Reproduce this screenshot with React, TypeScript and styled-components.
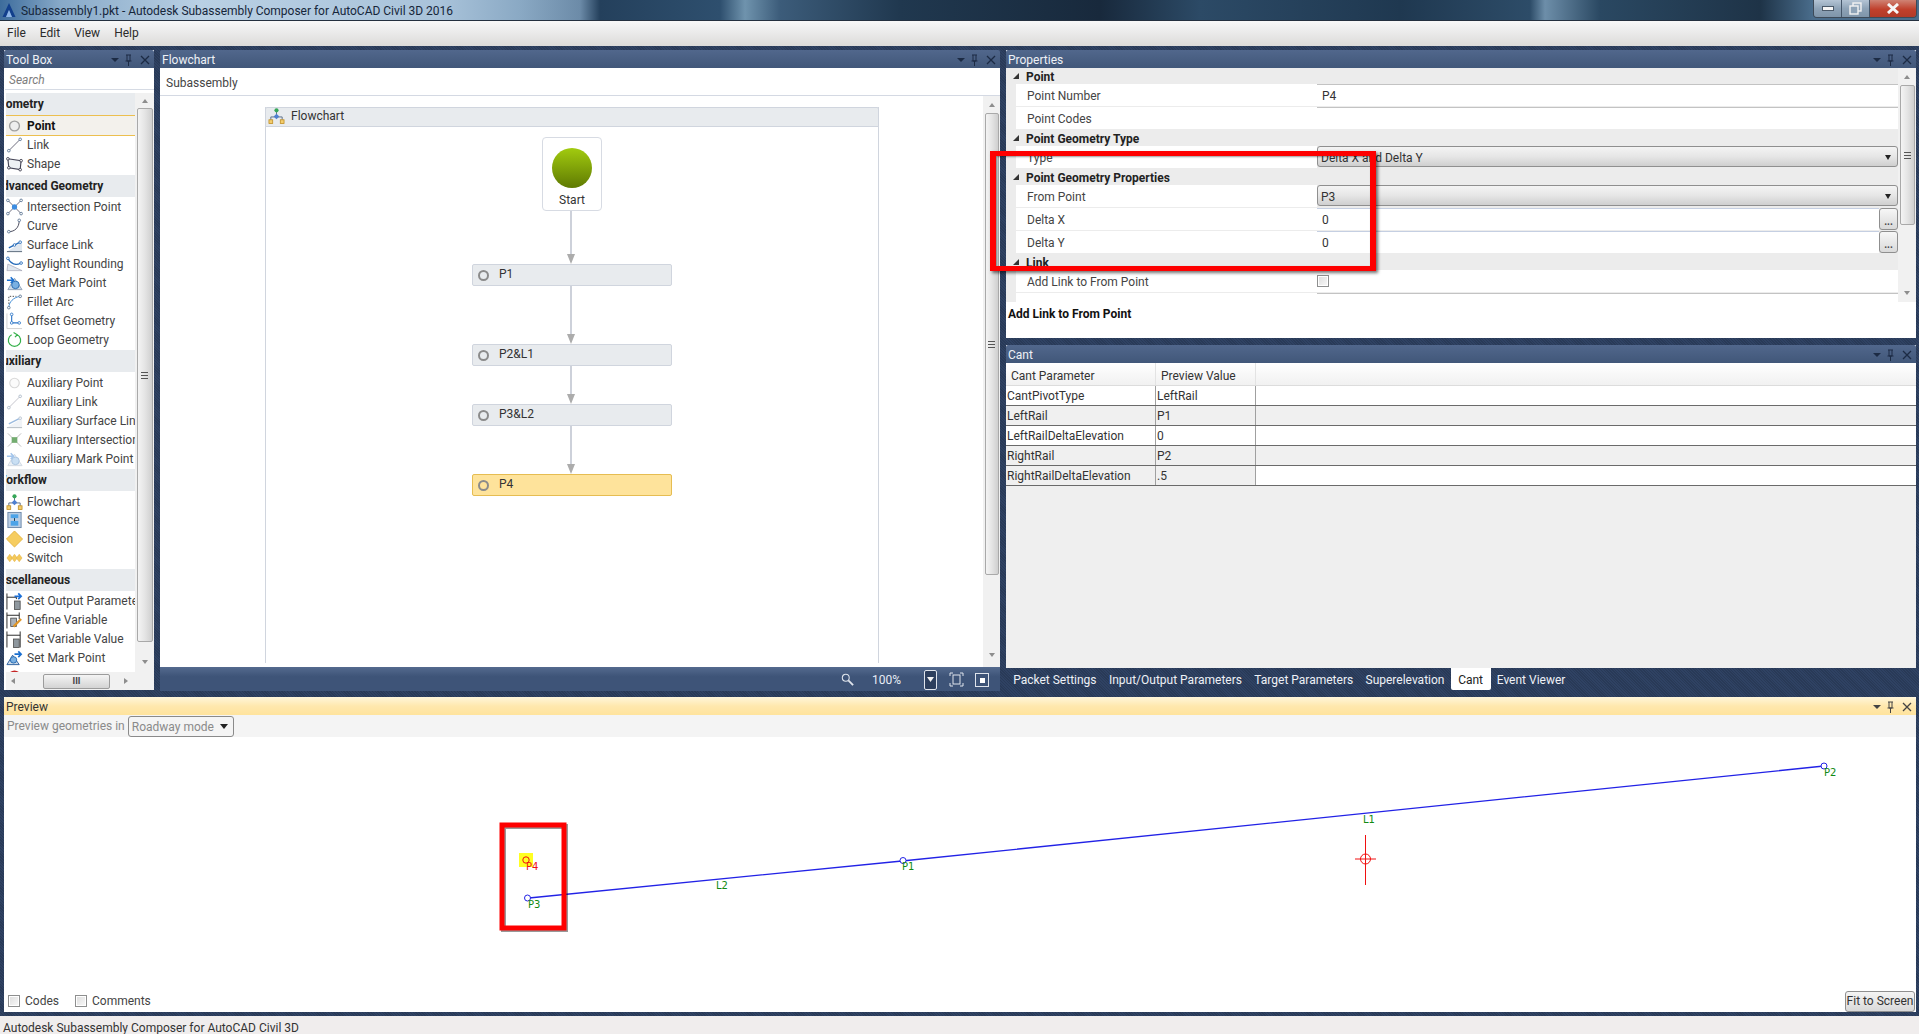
import React from 'react';
import styled, { createGlobalStyle, css } from 'styled-components';

const GlobalStyle = createGlobalStyle`
  html, body {
    margin: 0;
    padding: 0;
    overflow: hidden;
    background: #2c3e5c;
  }
  * { box-sizing: border-box; }
`;

const navy = css`
  background: repeating-linear-gradient(45deg, #2f4263 0 1px, #293a57 1px 2px);
`;

const Window = styled.div`
  width: 1919px;
  height: 1034px;
  position: relative;
  display: flex;
  flex-direction: column;
  overflow: hidden;
  font-family: Roboto, 'Liberation Sans', sans-serif;
  font-size: 12px;
  color: #333;
  ${navy}
`;

/* ---------- title + menu ---------- */
const TitleBar = styled.div`
  height: 21px;
  display: flex;
  align-items: center;
  padding-left: 2px;
  gap: 5px;
  flex: none;
  border-bottom: 1px solid #24303f;
  background: linear-gradient(90deg, #3d6c9c 0, #87a9c8 60px, #b9d0e4 200px, #a9c3da 440px, #8aa9c4 520px, #6c8ba8 580px, #24405c 600px, #2e4f6e 720px, #6f93ad 745px, #3c5c7a 780px, #20384f 900px, #18293c 1100px, #2c4a66 1200px, #1f3850 1400px, #2d4c68 1530px, #6d8ea9 1545px, #2a4862 1600px, #1e3347 1760px, #4a6d8c 1813px);
`;

const TitleText = styled.span`
  flex: 1;
  color: #16263a;
  letter-spacing: -0.02px;
  line-height: 20px;
  padding-top: 1px;
`;

const WindowButtons = styled.div`
  display: flex;
  align-self: flex-start;
  height: 18px;
  width: 104px;
  margin-right: 2px;
  border: 1px solid #3d4a58;
  border-top: none;
  border-radius: 0 0 4px 4px;
  overflow: hidden;
`;

const WindowButton = styled.div<{ $wide?: boolean; $close?: boolean }>`
  flex: ${p => (p.$wide ? '0 0 47px' : '1')};
  display: flex;
  align-items: center;
  justify-content: center;
  border-left: 1px solid #44566a;
  background: ${p =>
    p.$close
      ? 'linear-gradient(#cf8374, #c0402c 55%, #b23a28)'
      : 'linear-gradient(#b4c4d4, #8ea3b7 50%, #7f95aa)'};
  &:first-child { border-left: none; }
`;

const MenuBar = styled.div`
  height: 25px;
  flex: none;
  display: flex;
  align-items: center;
  padding: 0 0 1px 7px;
  gap: 14px;
  background: linear-gradient(#f8f8f8, #ececec 40%, #dcdbd9);
  color: #2b2b2b;
`;

/* ---------- panels ---------- */
const TopArea = styled.div`
  flex: none;
  height: 641px;
  margin-top: 4px;
  padding-left: 4px;
  display: flex;
  gap: 6px;
`;

const PanelHead = styled.div<{ $active?: boolean }>`
  height: 18px;
  flex: none;
  display: flex;
  align-items: center;
  padding: 1px 3px 0 2px;
  border-radius: 2px 2px 0 0;
  color: ${p => (p.$active ? '#333' : '#eef1f6')};
  background: ${p =>
    p.$active
      ? 'linear-gradient(#fff6da, #ffe8ae 50%, #ffe39c)'
      : 'linear-gradient(#51678c, #415779)'};
`;

const PanelTitle = styled.span`
  flex: 1;
`;

const Column = styled.div<{ $w: number }>`
  width: ${p => p.$w}px;
  display: flex;
  flex-direction: column;
`;

const ToolPanel = styled(Column)`
  height: 640px;
  background: #fff;
`;

const SearchBox = styled.div`
  height: 22px;
  flex: none;
  padding: 5px 4px 0;
  color: #7d7d7d;
  font-style: italic;
  border-bottom: 1px solid #d6dbe4;
  margin-bottom: 3px;
  margin-left: 1px;
`;

const ToolBody = styled.div`
  flex: 1;
  min-height: 0;
  display: flex;
  padding-left: 2px;
`;

const ToolList = styled.div`
  width: 129px;
  height: 579px;
  overflow: hidden;
`;

const Category = styled.div`
  height: 22px;
  line-height: 22px;
  background: #e8ebee;
  font-weight: 700;
  color: #222;
  overflow: hidden;
  white-space: nowrap;
  margin-bottom: 2px;
`;

const CategoryText = styled.span<{ $shift: number }>`
  display: inline-block;
  margin-left: ${p => -p.$shift}px;
`;

const ToolRow = styled.div<{ $sel?: boolean }>`
  height: ${p => (p.$sel ? '21px' : '18.95px')};
  display: flex;
  align-items: center;
  gap: 4px;
  white-space: nowrap;
  padding-bottom: ${p => (p.$sel ? 0 : 2)}px;
  color: ${p => (p.$sel ? '#111' : '#444')};
  font-weight: ${p => (p.$sel ? 700 : 400)};
  ${p =>
    p.$sel &&
    css`
      margin-top: -2px;
      margin-bottom: 1px;
      background: #f3f1ec;
      border-top: 1px solid #ecbf4f;
      border-bottom: 1px solid #ecbf4f;
    `}
`;

const VBar = styled.div<{ $w: number }>`
  width: ${p => p.$w}px;
  flex: none;
  display: flex;
  flex-direction: column;
  align-items: center;
  background: #f1f1f1;
`;

const Arrow = styled.div<{ $dir: 'up' | 'down' | 'left' | 'right' }>`
  width: 0;
  height: 0;
  flex: none;
  border: 3px solid transparent;
  ${p => (p.$dir === 'up' ? 'border-bottom: 4px solid #8d8d8d; border-top: none;' : '')}
  ${p => (p.$dir === 'down' ? 'border-top: 4px solid #8d8d8d; border-bottom: none;' : '')}
  ${p => (p.$dir === 'left' ? 'border-right: 4px solid #8d8d8d; border-left: none;' : '')}
  ${p => (p.$dir === 'right' ? 'border-left: 4px solid #8d8d8d; border-right: none;' : '')}
`;

const ArrowSlot = styled.div<{ $h: number }>`
  height: ${p => p.$h}px;
  flex: none;
  display: flex;
  align-items: center;
  justify-content: center;
`;

const Thumb = styled.div<{ $h: number }>`
  width: calc(100% - 3px);
  height: ${p => p.$h}px;
  flex: none;
  display: flex;
  align-items: center;
  justify-content: center;
  border: 1px solid #a9a9a9;
  border-radius: 2px;
  background: linear-gradient(90deg, #f4f4f4, #e4e4e4 50%, #cfcfcf);
`;

const Grip = styled.div`
  width: 7px;
  height: 7px;
  border-top: 1px solid #555;
  border-bottom: 1px solid #555;
  position: relative;
  &::after {
    content: '';
    position: absolute;
    left: 0;
    right: 0;
    top: 2px;
    height: 1px;
    background: #555;
  }
`;

const Filler = styled.div`
  flex: 1;
`;

const HBar = styled.div`
  height: 18px;
  flex: none;
  display: flex;
  align-items: center;
  background: #f1f1f1;
  margin-left: 2px;
`;

const HThumb = styled.div`
  width: 67px;
  height: 15px;
  margin-left: 23px;
  margin-right: 9px;
  display: flex;
  align-items: center;
  justify-content: center;
  border: 1px solid #9c9c9c;
  border-radius: 2px;
  background: linear-gradient(#f4f4f4, #d4d4d4);
  color: #444;
  font-size: 9px;
  font-weight: 700;
  letter-spacing: 0;
`;

const HSpot = styled.div`
  width: 14px;
  display: flex;
  justify-content: center;
`;

/* ---------- flowchart ---------- */
const FlowWhite = styled.div`
  height: 599px;
  flex: none;
  background: #fff;
  display: flex;
  flex-direction: column;
`;

const Crumb = styled.div`
  height: 28px;
  flex: none;
  padding: 8px 6px 0;
  border-bottom: 1px solid #d4d9e3;
  color: #444;
`;

const FlowBody = styled.div`
  flex: 1;
  min-height: 0;
  display: flex;
`;

const FlowCanvas = styled.div`
  flex: 1;
  padding: 11px 0 0 105px;
`;

const Sequence = styled.div`
  width: 614px;
  height: 556px;
  display: flex;
  flex-direction: column;
  align-items: center;
  border-left: 1px solid #d0d5de;
  border-right: 1px solid #d0d5de;
`;

const SeqHead = styled.div`
  width: calc(100% + 2px);
  height: 20px;
  flex: none;
  display: flex;
  align-items: center;
  gap: 6px;
  padding: 0 0 2px 2px;
  margin-bottom: 10px;
  background: #e8ebee;
  border: 1px solid #d0d5de;
  color: #333;
  border-radius: 2px 2px 0 0;
`;

const StartCard = styled.div`
  width: 60px;
  height: 74px;
  flex: none;
  display: flex;
  flex-direction: column;
  align-items: center;
  padding-top: 10px;
  border: 1px solid #d7dbe3;
  border-radius: 4px;
  color: #333;
`;

const StartBall = styled.div`
  width: 40px;
  height: 40px;
  margin-bottom: 5px;
  border-radius: 50%;
  background: linear-gradient(#a2cb0f, #5f7a02);
`;

const Connector = styled.div<{ $h: number }>`
  height: ${p => p.$h}px;
  width: 11px;
  margin-right: 2px;
  flex: none;
  display: flex;
  flex-direction: column;
  align-items: center;
`;

const ConnLine = styled.div`
  width: 2px;
  flex: 1;
  background: #cdd1da;
`;

const ConnTip = styled.div`
  width: 0;
  height: 0;
  flex: none;
  border-left: 4px solid transparent;
  border-right: 4px solid transparent;
  border-top: 10px solid #acacac;
`;

const Node = styled.div<{ $sel?: boolean }>`
  width: 200px;
  height: 22px;
  flex: none;
  display: flex;
  align-items: center;
  gap: 10px;
  padding: 0 5px 2px;
  border-radius: 2px;
  color: #333;
  background: ${p => (p.$sel ? '#fee39b' : '#e8ebee')};
  border: 1px solid ${p => (p.$sel ? '#e6bd52' : '#d0d5de')};
`;

const NodeDot = styled.div`
  width: 11px;
  height: 11px;
  border-radius: 50%;
  margin-top: 3px;
  border: 2px solid #8b8b8b;
`;

const ZoomBar = styled.div`
  height: 24px;
  flex: none;
  display: flex;
  align-items: center;
  padding: 1px 0 0 681px;
  color: #e8edf5;
  background: linear-gradient(#546a8e, #3e5478 40%);
`;

const ZoomValue = styled.span`
  margin: 0 0 0 18px;
  width: 60px;
`;

const ZoomDrop = styled.div`
  width: 15px;
  height: 20px;
  display: flex;
  align-items: center;
  justify-content: center;
  border: 1px solid #dfe4ec;
  border-radius: 2px;
  background: #2d3f5e;
  margin-right: 12px;
`;

const ZoomIcon = styled.div`
  margin-right: 11px;
  display: flex;
`;

/* ---------- properties ---------- */
const PropPanel = styled.div`
  height: 288px;
  flex: none;
  display: flex;
  flex-direction: column;
  background: #fff;
`;

const PropScroller = styled.div`
  height: 234px;
  flex: none;
  display: flex;
  background: #ececec;
`;

const PropGrid = styled.div`
  flex: 1;
  overflow: hidden;
`;

const Section = styled.div`
  height: 16px;
  display: flex;
  align-items: center;
  background: #ececec;
  font-weight: 700;
  color: #222;
  gap: 7px;
  padding: 1px 0 0 7px;
`;

const SectionArrow = styled.div`
  width: 0;
  height: 0;
  margin-bottom: 2px;
  border-left: 6px solid transparent;
  border-bottom: 6px solid #333;
`;

const PropRow = styled.div`
  height: 23px;
  display: flex;
  background: #ececec;
  padding-left: 10px;
`;

const PropLabel = styled.div`
  width: 301px;
  flex: none;
  display: flex;
  align-items: center;
  padding: 2px 0 0 11px;
  margin-bottom: 1px;
  background: #fff;
  color: #444;
`;

const ValueBox = styled.div`
  flex: 1;
  min-width: 0;
  display: flex;
  align-items: center;
  padding-left: 5px;
  margin-bottom: 1px;
  background: #fff;
  color: #333;
  border-top: 1px solid #c3c3c3;
`;

const ValueSpin = styled(ValueBox)`
  border-top-color: #c5cfe2;
`;

const DropValue = styled.div`
  flex: 1;
  display: flex;
  align-items: center;
  justify-content: space-between;
  padding: 2px 6px 0 3px;
  margin-bottom: 2px;
  border: 1px solid #8f8f8f;
  border-radius: 3px;
  color: #333;
  background: linear-gradient(#f4f4f4, #e6e6e6 50%, #cfcfcf);
`;

const DropCaret = styled.div`
  width: 0;
  height: 0;
  border-left: 3px solid transparent;
  border-right: 3px solid transparent;
  border-top: 5px solid #222;
`;

const DotsButton = styled.div`
  width: 19px;
  margin-bottom: 1px;
  display: flex;
  align-items: flex-end;
  justify-content: center;
  font-size: 10px;
  font-weight: 700;
  line-height: 15px;
  color: #444;
  border: 1px solid #8f8f8f;
  border-radius: 3px;
  background: linear-gradient(#f7f7f7, #d9d9d9);
`;

const CheckBox = styled.div<{ $size?: number }>`
  width: ${p => p.$size ?? 12}px;
  height: ${p => p.$size ?? 12}px;
  flex: none;
  border: 1px solid #8e8f8f;
  background: linear-gradient(135deg, #dcdcdc, #fafafa);
  box-shadow: inset 0 0 0 1px #fff;
`;

const CheckCell = styled.div`
  flex: 1;
  display: flex;
  align-items: center;
  background: #fff;
  margin-bottom: 1px;
`;

const Hint = styled.div`
  flex: 1;
  padding: 5px 2px;
  font-weight: 700;
  color: #111;
`;

/* ---------- cant ---------- */
const CantPanel = styled.div`
  height: 323px;
  flex: none;
  margin-top: 7px;
  display: flex;
  flex-direction: column;
  background: #efefef;
`;

const CantRow = styled.div<{ $head?: boolean; $alt?: boolean; $last?: boolean }>`
  height: ${p => (p.$head ? '23px' : '20px')};
  display: grid;
  grid-template-columns: 150px 100px 1fr;
  color: #333;
  background: ${p =>
    p.$head ? 'linear-gradient(#fff, #f1f1f1)' : p.$alt && !p.$last ? '#f0f0f0' : '#fff'};
  border-bottom: 1px solid ${p => (p.$head ? '#dcdcdc' : '#6a6a6a')};
`;

const CantCell = styled.div<{ $head?: boolean; $alt?: boolean }>`
  display: flex;
  align-items: center;
  padding-left: ${p => (p.$head ? '5px' : '1px')};
  padding-top: ${p => (p.$head ? '3px' : '0')};
  border-right: 1px solid ${p => (p.$head ? '#e3e3e3' : '#a0a0a0')};
  background: ${p => (p.$alt ? '#f0f0f0' : 'transparent')};
  &:last-child { border-right: none; }
`;

const TabStrip = styled.div`
  height: 22px;
  flex: none;
  display: flex;
  align-items: stretch;
  padding-left: 1px;
`;

const Tab = styled.div<{ $on?: boolean }>`
  display: flex;
  align-items: center;
  padding: 2px ${p => (p.$on ? 7.5 : 6.2)}px 0;
  border-radius: 0 0 2px 2px;
  color: ${p => (p.$on ? '#222' : '#eef1f6')};
  background: ${p => (p.$on ? '#fff' : 'transparent')};
`;

/* ---------- preview ---------- */
const PreviewPanel = styled.div`
  margin: 6px 0 0 4px;
  width: 1912px;
  height: 315px;
  flex: none;
  display: flex;
  flex-direction: column;
  background: #fff;
`;

const PreviewTools = styled.div`
  height: 22px;
  flex: none;
  display: flex;
  align-items: center;
  gap: 3px;
  padding-left: 3px;
  color: #8a8a8a;
  background: #f4f4f4;
`;

const ModeSelect = styled.div`
  width: 106px;
  height: 21px;
  margin-top: 1px;
  display: flex;
  align-items: center;
  justify-content: space-between;
  padding: 0 5px 0 3px;
  border: 1px solid #8a8a8a;
  border-radius: 3px;
  color: #8a8a8a;
`;

const Canvas = styled.svg`
  display: block;
  width: 1912px;
  height: 253px;
  flex: none;
  font-family: 'DejaVu Sans', sans-serif;
  font-size: 10px;
`;

const PreviewFoot = styled.div`
  height: 22px;
  flex: none;
  display: flex;
  align-items: center;
  padding: 0 1px 0 4px;
  color: #444;
`;

const CheckLabel = styled.label<{ $gap: number }>`
  display: flex;
  align-items: center;
  gap: 5px;
  margin-right: ${p => p.$gap}px;
`;

const FitButton = styled.div`
  width: 70px;
  height: 21px;
  margin-left: auto;
  display: flex;
  align-items: center;
  justify-content: center;
  border: 1px solid #8f8f8f;
  border-radius: 3px;
  color: #333;
  background: linear-gradient(#f4f4f4, #d9d9d9);
`;

const StatusBar = styled.div`
  height: 18px;
  flex: none;
  margin-top: 4px;
  padding: 5px 0 0 3px;
  background: #f0eded;
  color: #333;
  white-space: nowrap;
  overflow: hidden;
`;

const Markup = styled.div`
  position: absolute;
  left: 990px;
  top: 151px;
  width: 386px;
  height: 120px;
  border: 5px solid #fe0000;
  border-left-width: 6px;
  border-right-width: 6px;
  box-shadow: 2px 2px 3px rgba(0, 0, 0, 0.55), inset 1px 1px 2px rgba(0, 0, 0, 0.4);
  pointer-events: none;
`;

/* ---------- drawings ---------- */
type IconKind =
  | 'point' | 'link' | 'shape' | 'intersection' | 'curve' | 'surface' | 'daylight' | 'mark'
  | 'fillet' | 'offset' | 'loop' | 'auxPoint' | 'auxLink' | 'auxSurface' | 'auxIntersection'
  | 'auxMark' | 'flowchart' | 'sequence' | 'decision' | 'switch' | 'output' | 'define'
  | 'setVar' | 'setMark' | 'stop';

const IconSvg = styled.svg`
  flex: none;
  display: block;
`;

const Handle = ({ x, y, c = '#56708f' }: { x: number; y: number; c?: string }) => (
  <circle cx={x} cy={y} r="1.4" fill="#fff" stroke={c} strokeWidth="0.9" />
);

const ToolIcon = ({ kind }: { kind: IconKind }) => {
  const shapes: Record<IconKind, React.ReactNode> = {
    point: <circle cx="9" cy="9" r="5.2" fill="#eee" stroke="#a0a0a0" strokeWidth="1.5" />,
    link: <g><path d="M3 15 15 3" stroke="#667" fill="none" /><Handle x={3} y={15} /><Handle x={15} y={3} /></g>,
    shape: <g><path d="M2 3.5 16 5.5 15 15 3 13Z" fill="#eef1f4" stroke="#445" strokeWidth="1.2" /><Handle x={2} y={3.5} c="#334" /><Handle x={16} y={5.5} c="#334" /><Handle x={15} y={15} c="#334" /><Handle x={3} y={13} c="#334" /></g>,
    intersection: <g><path d="M2 2 16 16M16 2 2 16" stroke="#667" /><circle cx="9" cy="9" r="2.8" fill="#3c8ce0" /><Handle x={2} y={2} /><Handle x={16} y={2} /><Handle x={2} y={16} /><Handle x={16} y={16} /></g>,
    curve: <g><path d="M3 15C9 15 14 11 14 3" stroke="#445" fill="none" /><Handle x={3} y={15} /><Handle x={14} y={3} /></g>,
    surface: <g><path d="M1 16H17V6Z" fill="#dfe6ee" /><path d="M1 16H17" stroke="#567" /><path d="M3 12 15 6" stroke="#2168b8" strokeWidth="1.4" /><Handle x={9} y={9} c="#2168b8" /><Handle x={15} y={6} c="#2168b8" /></g>,
    daylight: <g><path d="M1 16H17L2 9Z" fill="#dfe6ee" stroke="#99a" strokeWidth="0.6" /><path d="M2 3C5 9 10 11 16 8" stroke="#2168b8" fill="none" strokeWidth="1.3" /><Handle x={2} y={3} c="#2168b8" /><Handle x={16} y={8} c="#2168b8" /></g>,
    mark: <g><path d="M2 16 9 4 17 16Z" fill="#cfdbe8" stroke="#8fa2b8" /><circle cx="10" cy="11" r="4" fill="#7ab0e2" stroke="#2b6cb0" /><path d="M1 6H7M5 3 8 6 5 9" stroke="#1a6fd0" strokeWidth="1.6" fill="none" /></g>,
    fillet: <g><path d="M3 15C3 9 8 4 15 3" stroke="#3b8ad6" fill="none" /><path d="M3 11V3H11" stroke="#444" strokeDasharray="1.5 1.5" fill="none" /><Handle x={3} y={15} /><Handle x={15} y={3} /></g>,
    offset: <g><path d="M1 1V17H17" stroke="#cfcfcf" fill="none" /><path d="M6 2V11H14" stroke="#2d76c8" strokeWidth="1.2" fill="none" /><Handle x={6} y={2} c="#2d76c8" /><Handle x={6} y={11} c="#2d76c8" /><Handle x={14} y={11} c="#2d76c8" /></g>,
    loop: <path d="M6 3.5A6.5 6.5 0 1 0 12 3.5M8 1 12 3.5 9.5 6" stroke="#35b04a" strokeWidth="1.3" fill="none" />,
    auxPoint: <circle cx="9" cy="9" r="5" fill="#fbfbfb" stroke="#d8d8d8" strokeWidth="1.2" />,
    auxLink: <g opacity="0.5"><path d="M3 15 15 3" stroke="#889" /><Handle x={3} y={15} /><Handle x={15} y={3} /></g>,
    auxSurface: <g opacity="0.45"><path d="M1 16H17V6Z" fill="#dfe6ee" /><path d="M1 16H17" stroke="#567" /><path d="M3 12 15 6" stroke="#2168b8" strokeWidth="1.4" /><Handle x={15} y={6} /></g>,
    auxIntersection: <g><path d="M2 2 16 16M16 2 2 16" stroke="#bbb" /><rect x="6" y="6" width="6" height="6" fill="#73ac70" /></g>,
    auxMark: <g opacity="0.4"><path d="M2 16 9 4 17 16Z" fill="#cfdbe8" stroke="#8fa2b8" /><circle cx="10" cy="11" r="4" fill="#7ab0e2" stroke="#2b6cb0" /><path d="M1 6H7M5 3 8 6 5 9" stroke="#1a6fd0" strokeWidth="1.6" fill="none" /></g>,
    flowchart: <g><path d="M3 13V10H15V13M9 4V10" stroke="#5b6d86" fill="none" /><circle cx="9" cy="3" r="2.2" fill="#35a658" /><path d="M9 6.5 12 9.5 9 12.5 6 9.5Z" fill="#4f7fd0" /><rect x="1" y="13" width="4" height="4" fill="#f3cd6d" stroke="#bd8a1e" strokeWidth="0.8" /><rect x="13" y="13" width="4" height="4" fill="#f3cd6d" stroke="#bd8a1e" strokeWidth="0.8" /></g>,
    sequence: <g><rect x="2" y="1" width="14" height="16" fill="#b9cde4" stroke="#6d88a8" /><rect x="5" y="3" width="8" height="4" fill="#4da3e8" /><rect x="5" y="10" width="8" height="5" fill="#4da3e8" /><path d="M9 7V10" stroke="#134" /></g>,
    decision: <path d="M9 0.5 17.5 9 9 17.5 0.5 9Z" fill="#f6cd60" stroke="#e4b33e" />,
    switch: <g fill="#f4c95a" stroke="#e0ae3c" strokeWidth="0.5"><path d="M4 5 7 9 4 13 1 9Z" /><path d="M9 5 12 9 9 13 6 9Z" /><path d="M14 5 17 9 14 13 11 9Z" /></g>,
    output: <g><path d="M1 1V18M1 5H11M11 7V5" stroke="#222" fill="none" /><rect x="9" y="9" width="6" height="9" fill="#8f989f" stroke="#444" strokeWidth="0.8" /><path d="M9 4H15M13 1 16 4 13 7" stroke="#1d6fd6" strokeWidth="1.8" fill="none" /></g>,
    define: <g><path d="M1 1V18M1 4H14M14 1V8" stroke="#222" fill="none" /><rect x="5" y="7" width="6" height="9" fill="#aab1b8" stroke="#444" strokeWidth="0.8" /><path d="M8 16 16 8" stroke="#e0972a" strokeWidth="2.4" /></g>,
    setVar: <g><path d="M1 1V18M1 5H15M15 1V18" stroke="#222" fill="none" /><rect x="8" y="9" width="6" height="9" fill="#8f989f" stroke="#444" strokeWidth="0.8" /></g>,
    setMark: <g><path d="M1 16 7 6 14 16Z" fill="#cfdbe8" stroke="#2b5f9e" /><circle cx="8" cy="11" r="3.4" fill="#7ab0e2" stroke="#2b6cb0" /><path d="M9 5H15M13 2 16 5 13 8" stroke="#1a6fd0" strokeWidth="1.8" fill="none" /></g>,
    stop: <circle cx="9" cy="9" r="7" fill="#c52525" />,
  };
  return (
    <IconSvg width="17" height="18" viewBox="0 0 18 18">
      {shapes[kind]}
    </IconSvg>
  );
};

const HeadGlyphs = styled.svg`
  flex: none;
  display: block;
`;

const PanelControls = ({ active }: { active?: boolean }) => {
  const c = active ? '#444' : '#1c2b44';
  return (
    <HeadGlyphs width="40" height="14" viewBox="0 0 40 14">
      <path d="M0 5H8L4 9Z" fill={c} />
      <path d="M15 2H20M16 2V8H19V2M14.5 8H20.5M17.5 8V13" stroke={c} strokeWidth="1" fill="none" />
      <path d="M30 3 38 11M38 3 30 11" stroke={c} strokeWidth="1.3" fill="none" />
    </HeadGlyphs>
  );
};

const Panel = ({ title, active }: { title: string; active?: boolean }) => (
  <PanelHead $active={active}>
    <PanelTitle>{title}</PanelTitle>
    <PanelControls active={active} />
  </PanelHead>
);

const Scroll = ({ w, top, len, bottom }: { w: number; top: number; len: number; bottom: number }) => (
  <VBar $w={w}>
    <ArrowSlot $h={top}><Arrow $dir="up" /></ArrowSlot>
    <Thumb $h={len}><Grip /></Thumb>
    <Filler />
    <ArrowSlot $h={bottom}><Arrow $dir="down" /></ArrowSlot>
  </VBar>
);

// shift: the list is scrolled sideways, so the first letters of each heading are hidden
const tools: { title: string; shift: number; items: [string, IconKind][] }[] = [
  { title: 'Geometry', shift: 15, items: [['Point', 'point'], ['Link', 'link'], ['Shape', 'shape']] },
  {
    title: 'Advanced Geometry',
    shift: 12,
    items: [
      ['Intersection Point', 'intersection'], ['Curve', 'curve'], ['Surface Link', 'surface'],
      ['Daylight Rounding', 'daylight'], ['Get Mark Point', 'mark'], ['Fillet Arc', 'fillet'],
      ['Offset Geometry', 'offset'], ['Loop Geometry', 'loop'],
    ],
  },
  {
    title: 'Auxiliary',
    shift: 12,
    items: [
      ['Auxiliary Point', 'auxPoint'], ['Auxiliary Link', 'auxLink'], ['Auxiliary Surface Link', 'auxSurface'],
      ['Auxiliary Intersection', 'auxIntersection'], ['Auxiliary Mark Point', 'auxMark'],
    ],
  },
  {
    title: 'Workflow',
    shift: 10,
    items: [['Flowchart', 'flowchart'], ['Sequence', 'sequence'], ['Decision', 'decision'], ['Switch', 'switch']],
  },
  {
    title: 'Miscellaneous',
    shift: 14,
    items: [
      ['Set Output Parameter', 'output'], ['Define Variable', 'define'],
      ['Set Variable Value', 'setVar'], ['Set Mark Point', 'setMark'], ['', 'stop'],
    ],
  },
];

const cantRows = [
  ['CantPivotType', 'LeftRail'],
  ['LeftRail', 'P1'],
  ['LeftRailDeltaElevation', '0'],
  ['RightRail', 'P2'],
  ['RightRailDeltaElevation', '.5'],
];

const tabs = ['Packet Settings', 'Input/Output Parameters', 'Target Parameters', 'Superelevation', 'Cant', 'Event Viewer'];

const Blue = '#2222e6';
const Green = '#128a12';

const PreviewDrawing = () => (
  <Canvas viewBox="4 737 1912 253">
    <path d="M529 898 902 861 1824 766" stroke={Blue} strokeWidth="1.3" fill="none" />
    <circle cx="527.5" cy="898" r="3" fill="#fff" stroke={Blue} />
    <circle cx="903" cy="860.5" r="3" fill="#fff" stroke={Blue} />
    <circle cx="1824" cy="766" r="3" fill="#fff" stroke={Blue} />
    <text x="528" y="908" fill={Green}>P3</text>
    <text x="902" y="870" fill={Green}>P1</text>
    <text x="1824" y="776" fill={Green}>P2</text>
    <text x="716" y="889" fill={Green}>L2</text>
    <text x="1363" y="823" fill={Green}>L1</text>
    <rect x="519" y="853" width="14" height="14" fill="#ffff22" />
    <circle cx="526" cy="860" r="3.2" fill="none" stroke="#f01010" />
    <text x="526" y="870" fill="#f01010">P4</text>
    <path d="M1365.5 835V885M1355 859H1376" stroke="#f01010" fill="none" />
    <circle cx="1365.5" cy="859" r="5" fill="none" stroke="#f01010" />
    <rect x="503.5" y="826.5" width="62" height="103" fill="none" stroke="#000" strokeOpacity="0.4" strokeWidth="5" />
    <rect x="502" y="825" width="62" height="103" fill="none" stroke="#fe0000" strokeWidth="5" />
  </Canvas>
);

export default function App() {
  return (
    <Window>
      <GlobalStyle />
      <TitleBar>
        <svg width="14" height="16" viewBox="0 0 14 16">
          <path d="M7 1 13.5 15H10L7 8 4 15H.5Z" fill="#123f8c" />
          <path d="M7 8 10 15H4Z" fill="#8fb6e8" />
        </svg>
        <TitleText>Subassembly1.pkt - Autodesk Subassembly Composer for AutoCAD Civil 3D 2016</TitleText>
        <WindowButtons>
          <WindowButton>
            <svg width="12" height="6" viewBox="0 0 12 6"><rect x=".5" y=".5" width="11" height="4" fill="#f5f5f5" stroke="#4b5a6a" /></svg>
          </WindowButton>
          <WindowButton>
            <svg width="13" height="13" viewBox="0 0 13 13" fill="none" stroke="#f2f2f2" strokeWidth="1.4">
              <rect x="4" y="1" width="8" height="8" />
              <rect x="1" y="4" width="8" height="8" fill="#8ea3b7" />
            </svg>
          </WindowButton>
          <WindowButton $wide $close>
            <svg width="14" height="11" viewBox="0 0 14 11"><path d="M2 1 12 10M12 1 2 10" stroke="#f6f6f6" strokeWidth="3" /></svg>
          </WindowButton>
        </WindowButtons>
      </TitleBar>
      <MenuBar>
        <span>File</span>
        <span>Edit</span>
        <span>View</span>
        <span>Help</span>
      </MenuBar>

      <TopArea>
        <ToolPanel $w={150}>
          <Panel title="Tool Box" />
          <SearchBox>Search</SearchBox>
          <ToolBody>
            <ToolList>
              {tools.map(group => (
                <div key={group.title}>
                  <Category><CategoryText $shift={group.shift}>{group.title}</CategoryText></Category>
                  {group.items.map(([label, kind]) => (
                    <ToolRow key={kind} $sel={kind === 'point'}>
                      <ToolIcon kind={kind} />
                      {label}
                    </ToolRow>
                  ))}
                </div>
              ))}
            </ToolList>
            <Scroll w={19} top={15} len={534} bottom={20} />
          </ToolBody>
          <HBar>
            <HSpot><Arrow $dir="left" /></HSpot>
            <HThumb>III</HThumb>
            <HSpot><Arrow $dir="right" /></HSpot>
          </HBar>
        </ToolPanel>

        <Column $w={840}>
          <Panel title="Flowchart" />
          <FlowWhite>
            <Crumb>Subassembly</Crumb>
            <FlowBody>
              <FlowCanvas>
                <Sequence>
                  <SeqHead>
                    <ToolIcon kind="flowchart" />
                    Flowchart
                  </SeqHead>
                  <StartCard>
                    <StartBall />
                    Start
                  </StartCard>
                  <Connector $h={53}><ConnLine /><ConnTip /></Connector>
                  <Node><NodeDot />P1</Node>
                  <Connector $h={58}><ConnLine /><ConnTip /></Connector>
                  <Node><NodeDot />P2&amp;L1</Node>
                  <Connector $h={38}><ConnLine /><ConnTip /></Connector>
                  <Node><NodeDot />P3&amp;L2</Node>
                  <Connector $h={48}><ConnLine /><ConnTip /></Connector>
                  <Node $sel><NodeDot />P4</Node>
                </Sequence>
              </FlowCanvas>
              <Scroll w={17} top={17} len={462} bottom={24} />
            </FlowBody>
          </FlowWhite>
          <ZoomBar>
            <svg width="15" height="15" viewBox="0 0 15 15" fill="none" stroke="#dfe4ec">
              <circle cx="5.5" cy="5.5" r="4" strokeWidth="1.2" />
              <path d="M8.5 8.5 14 14" strokeWidth="2.2" />
            </svg>
            <ZoomValue>100%</ZoomValue>
            <ZoomDrop>
              <svg width="7" height="5" viewBox="0 0 7 5"><path d="M0 0H7L3.5 5Z" fill="#f2f2f2" /></svg>
            </ZoomDrop>
            <ZoomIcon>
              <svg width="15" height="15" viewBox="0 0 15 15" fill="none" stroke="#dfe4ec">
                <path d="M1 4V1H4M11 1H14V4M1 11V14H4M11 14H14V11" />
                <rect x="4" y="3" width="7" height="9" />
              </svg>
            </ZoomIcon>
            <ZoomIcon>
              <svg width="14" height="14" viewBox="0 0 14 14">
                <rect x=".5" y=".5" width="13" height="13" fill="#3e5478" stroke="#dfe4ec" />
                <rect x="5" y="5" width="5" height="5" fill="#fff" />
              </svg>
            </ZoomIcon>
          </ZoomBar>
        </Column>

        <Column $w={910}>
          <PropPanel>
            <Panel title="Properties" />
            <PropScroller>
              <PropGrid>
                <Section><SectionArrow />Point</Section>
                <PropRow><PropLabel>Point Number</PropLabel><ValueBox>P4</ValueBox></PropRow>
                <PropRow><PropLabel>Point Codes</PropLabel><ValueBox /></PropRow>
                <Section><SectionArrow />Point Geometry Type</Section>
                <PropRow>
                  <PropLabel>Type</PropLabel>
                  <DropValue>Delta X and Delta Y<DropCaret /></DropValue>
                </PropRow>
                <Section><SectionArrow />Point Geometry Properties</Section>
                <PropRow>
                  <PropLabel>From Point</PropLabel>
                  <DropValue>P3<DropCaret /></DropValue>
                </PropRow>
                <PropRow><PropLabel>Delta X</PropLabel><ValueSpin>0</ValueSpin><DotsButton>...</DotsButton></PropRow>
                <PropRow><PropLabel>Delta Y</PropLabel><ValueSpin>0</ValueSpin><DotsButton>...</DotsButton></PropRow>
                <Section><SectionArrow />Link</Section>
                <PropRow>
                  <PropLabel>Add Link to From Point</PropLabel>
                  <CheckCell><CheckBox /></CheckCell>
                </PropRow>
                <PropRow><PropLabel /><ValueBox /></PropRow>
              </PropGrid>
              <Scroll w={18} top={17} len={140} bottom={18} />
            </PropScroller>
            <Hint>Add Link to From Point</Hint>
          </PropPanel>

          <CantPanel>
            <Panel title="Cant" />
            <CantRow $head>
              <CantCell $head>Cant Parameter</CantCell>
              <CantCell $head>Preview Value</CantCell>
              <CantCell $head />
            </CantRow>
            {cantRows.map(([name, value], i) => (
              <CantRow key={name} $alt={i % 2 === 1} $last={i === 4}>
                <CantCell $alt={i === 4}>{name}</CantCell>
                <CantCell $alt={i === 4}>{value}</CantCell>
                <CantCell />
              </CantRow>
            ))}
          </CantPanel>

          <TabStrip>
            {tabs.map(t => (
              <Tab key={t} $on={t === 'Cant'}>{t}</Tab>
            ))}
          </TabStrip>
        </Column>
      </TopArea>

      <PreviewPanel>
        <Panel title="Preview" active />
        <PreviewTools>
          Preview geometries in
          <ModeSelect>
            Roadway mode
            <svg width="8" height="5" viewBox="0 0 8 5"><path d="M0 0H8L4 5Z" fill="#222" /></svg>
          </ModeSelect>
        </PreviewTools>
        <PreviewDrawing />
        <PreviewFoot>
          <CheckLabel $gap={16}><CheckBox />Codes</CheckLabel>
          <CheckLabel $gap={0}><CheckBox />Comments</CheckLabel>
          <FitButton>Fit to Screen</FitButton>
        </PreviewFoot>
      </PreviewPanel>

      <StatusBar>Autodesk Subassembly Composer for AutoCAD Civil 3D</StatusBar>
      <Markup />
    </Window>
  );
}
